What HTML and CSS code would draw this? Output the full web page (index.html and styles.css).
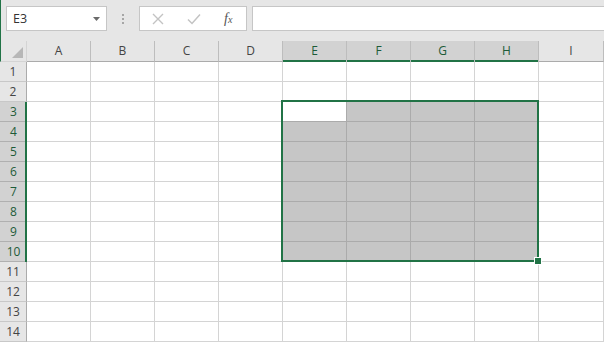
FILE: index.html
```html
<!DOCTYPE html>
<html lang="en">
<head>
  <meta charset="UTF-8" />
  <title>Book1 - Excel</title>
  <link rel="stylesheet" href="styles.css">
</head>
<body>
  <!-- Formula bar strip -->
  <div class="toolbar">
    <div class="namebox">
      <span>E3</span>
      <svg class="arrow" width="7" height="4" viewBox="0 0 7 4"><path d="M0 0h7L3.5 4z" fill="#6a6a6a"/></svg>
    </div>
    <div class="grip"><i></i><i></i><i></i></div>
    <div class="fxbox">
      <svg class="btn" width="12" height="12" viewBox="0 0 12 12"><path d="M1 1l10 10M11 1L1 11" stroke="#c3c3c3" stroke-width="1.4" fill="none"/></svg>
      <svg class="btn" width="14" height="12" viewBox="0 0 14 12"><path d="M1 6.5l4 4L13 1.5" stroke="#c3c3c3" stroke-width="1.5" fill="none"/></svg>
      <span class="fx">f<sub>x</sub></span>
    </div>
    <div class="formula"></div>
  </div>

  <!-- Worksheet grid -->
  <div class="sheet-wrap">
    <div class="sheet">
      <div class="corner"></div>
      <div class="ch">A</div><div class="ch">B</div><div class="ch">C</div><div class="ch">D</div>
      <div class="ch on">E</div><div class="ch on">F</div><div class="ch on">G</div><div class="ch on">H</div>
      <div class="ch last">I</div>

      <div class="rh">1</div><div></div><div></div><div></div><div></div><div></div><div></div><div></div><div></div><div></div>
      <div class="rh">2</div><div></div><div></div><div></div><div></div><div></div><div></div><div></div><div></div><div></div>
      <div class="rh on">3</div><div></div><div></div><div></div><div></div><div class="active"></div><div class="sel"></div><div class="sel"></div><div class="sel"></div><div></div>
      <div class="rh on">4</div><div></div><div></div><div></div><div></div><div class="sel"></div><div class="sel"></div><div class="sel"></div><div class="sel"></div><div></div>
      <div class="rh on">5</div><div></div><div></div><div></div><div></div><div class="sel"></div><div class="sel"></div><div class="sel"></div><div class="sel"></div><div></div>
      <div class="rh on">6</div><div></div><div></div><div></div><div></div><div class="sel"></div><div class="sel"></div><div class="sel"></div><div class="sel"></div><div></div>
      <div class="rh on">7</div><div></div><div></div><div></div><div></div><div class="sel"></div><div class="sel"></div><div class="sel"></div><div class="sel"></div><div></div>
      <div class="rh on">8</div><div></div><div></div><div></div><div></div><div class="sel"></div><div class="sel"></div><div class="sel"></div><div class="sel"></div><div></div>
      <div class="rh on">9</div><div></div><div></div><div></div><div></div><div class="sel"></div><div class="sel"></div><div class="sel"></div><div class="sel"></div><div></div>
      <div class="rh on">10</div><div></div><div></div><div></div><div></div><div class="sel"></div><div class="sel"></div><div class="sel"></div><div class="sel"></div><div></div>
      <div class="rh">11</div><div></div><div></div><div></div><div></div><div></div><div></div><div></div><div></div><div></div>
      <div class="rh">12</div><div></div><div></div><div></div><div></div><div></div><div></div><div></div><div></div><div></div>
      <div class="rh">13</div><div></div><div></div><div></div><div></div><div></div><div></div><div></div><div></div><div></div>
      <div class="rh">14</div><div></div><div></div><div></div><div></div><div></div><div></div><div></div><div></div><div></div>
    </div>

    <!-- Selection outline E3:H10 with fill handle -->
    <div class="selection"><div class="handle"></div></div>
  </div>
</body>
</html>
```

FILE: styles.css
```css
/* Page */
body {
  margin: 0;
  width: 604px;
  height: 343px;
  overflow: hidden;
  background: #fff;
  font-family: "Open Sans", "Noto Sans", sans-serif;
  color: #444;
}

/* Formula bar strip */
.toolbar {
  height: 41px;
  background: #e6e6e6;
  border-left: 1px solid #217346;
  box-sizing: border-box;
  display: flex;
  align-items: flex-start;
  padding: 6px 0 0 5px;
}
.namebox {
  width: 101px;
  height: 25px;
  box-sizing: border-box;
  background: #fff;
  border: 1px solid #c6c6c6;
  display: flex;
  align-items: center;
  justify-content: space-between;
  padding: 0 6px 0 6px;
  font-size: 12.5px;
  color: #333;
}
.namebox .arrow {
  margin-top: 1px;
}
.grip {
  width: 32px;
  height: 25px;
  display: flex;
  flex-direction: column;
  align-items: center;
  justify-content: center;
  gap: 2px;
}
.grip i {
  width: 2px;
  height: 2px;
  background: #a6a6a6;
}
.fxbox {
  width: 108px;
  height: 25px;
  box-sizing: border-box;
  background: #fff;
  border: 1px solid #c6c6c6;
  display: flex;
  align-items: center;
  padding-left: 12px;
}
.fxbox .btn {
  margin-right: 23px;
}
.fxbox .btn + .btn {
  margin-right: 23px;
}
.fx {
  font-family: "Liberation Serif", serif;
  font-style: italic;
  font-size: 14px;
  color: #555;
  line-height: 1;
}
.fx sub {
  font-size: 10px;
  vertical-align: 0;
}
.formula {
  flex: 1;
  height: 25px;
  margin-left: 5px;
  box-sizing: border-box;
  background: #fff;
  border: 1px solid #c6c6c6;
  border-right: none;
}

/* Worksheet */
.sheet-wrap {
  position: relative;
}
.sheet {
  display: grid;
  grid-template-columns: 27px repeat(8, 64px) 1fr;
  grid-template-rows: 21px;
  grid-auto-rows: 20px;
}
.sheet > div {
  box-sizing: border-box;
  border-right: 1px solid #d4d4d4;
  border-bottom: 1px solid #d4d4d4;
}

/* Headers */
.corner {
  position: relative;
  background: #e6e6e6;
  border-left: 1px solid #217346;
}
.corner::after {
  content: "";
  position: absolute;
  right: 3px;
  bottom: 3px;
  border-left: 11px solid transparent;
  border-bottom: 11px solid #b7b7b7;
}
.sheet > .ch {
  background: #e6e6e6;
  border-right-color: #bdbdbd;
  border-bottom-color: #ababab;
  font-size: 12px;
  text-align: center;
  line-height: 20px;
  color: #444;
}
.sheet > .ch.on {
  background: #d2d2d2;
  color: #1d5b38;
  border-bottom: none;
  box-shadow: inset 0 -2px 0 #217346;
  line-height: 20px;
}
.sheet > .rh {
  background: #e6e6e6;
  border-right-color: #ababab;
  border-bottom-color: #c8c8c8;
  font-size: 12px;
  text-align: center;
  line-height: 19px;
  color: #444;
}
.sheet > .rh.on {
  background: #d2d2d2;
  color: #1d5b38;
  border-right: none;
  border-bottom: none;
  box-shadow: inset -2px 0 0 #217346, inset 0 -1px 0 #b0b0b0;
  line-height: 20px;
}

/* Selected range */
.sheet > .sel {
  background: #c6c6c6;
  border-color: #ababab;
}
.sheet > .active {
  background: #fff;
  border-bottom-color: #ababab;
  border-right-color: #ababab;
}
.selection {
  position: absolute;
  left: 281px;
  top: 59px;
  width: 258px;
  height: 162px;
  box-sizing: border-box;
  border: 2px solid #217346;
  pointer-events: none;
}
.handle {
  position: absolute;
  right: -5px;
  bottom: -5px;
  width: 6px;
  height: 6px;
  background: #217346;
  border: 1px solid #fff;
}
```
